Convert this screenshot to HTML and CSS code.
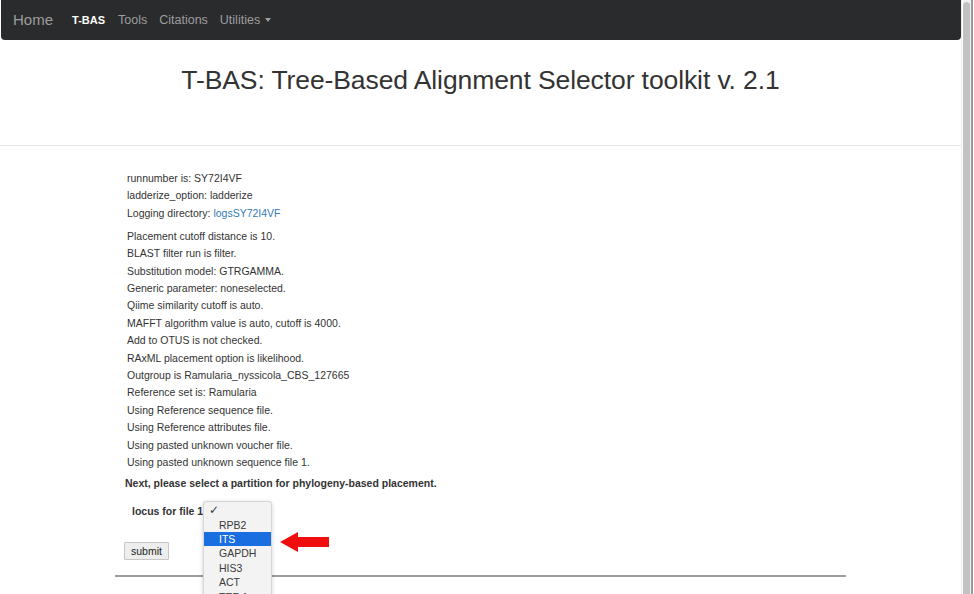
FILE: index.html
```html
<!DOCTYPE html>
<html>
<head>
<meta charset="utf-8">
<link rel="stylesheet" href="styles.css">
</head>
<body>
<div class="page">
  <div class="main">
    <nav class="navbar">
      <a class="brand">Home</a>
      <a class="nav-item active">T-BAS</a>
      <a class="nav-item">Tools</a>
      <a class="nav-item">Citations</a>
      <a class="nav-item">Utilities <span class="caret"></span></a>
    </nav>
    <header class="jumbo">
      <h1>T-BAS: Tree-Based Alignment Selector toolkit v. 2.1</h1>
    </header>
    <section class="content">
      <p class="group">runnumber is: SY72I4VF<br>ladderize_option: ladderize<br>Logging directory: <a class="link">logsSY72I4VF</a></p>
      <p class="group">Placement cutoff distance is 10.<br>BLAST filter run is filter.<br>Substitution model: GTRGAMMA.<br>Generic parameter: noneselected.<br>Qiime similarity cutoff is auto.<br>MAFFT algorithm value is auto, cutoff is 4000.<br>Add to OTUS is not checked.<br>RAxML placement option is likelihood.<br>Outgroup is Ramularia_nyssicola_CBS_127665<br>Reference set is: Ramularia<br>Using Reference sequence file.<br>Using Reference attributes file.<br>Using pasted unknown voucher file.<br>Using pasted unknown sequence file 1.</p>
      <form class="form">
        <p class="next">Next, please select a partition for phylogeny-based placement.</p>
        <div class="locus-row">
          <span class="locus-label">locus for file 1</span>
          <div class="select-wrap">
            <ul class="popup">
              <li class="opt check"><span class="tick">✓</span></li>
              <li class="opt">RPB2</li>
              <li class="opt selected">ITS</li>
              <li class="opt">GAPDH</li>
              <li class="opt">HIS3</li>
              <li class="opt">ACT</li>
              <li class="opt">TEF-1α</li>
            </ul>
            <svg class="arrow" width="50" height="22" viewBox="0 0 50 22">
              <polygon points="0,11 18,1 18,6 49,6 49,16 18,16 18,21" fill="#f00d0d"/>
            </svg>
          </div>
        </div>
        <button class="submit" type="button">submit</button>
      </form>
      <div class="rule"></div>
    </section>
  </div>
  <div class="scrollbar"><div class="thumb"></div></div>
</div>
</body>
</html>
```

FILE: styles.css
```css
html, body {
  margin: 0;
  padding: 0;
  background: #ffffff;
  height: 594px;
  overflow: hidden;
}
body {
  font-family: "Liberation Sans", Arial, Helvetica, sans-serif;
  color: #333333;
}
.page {
  display: flex;
  height: 594px;
}
.main {
  width: 962px;
  flex: none;
  border-right: 1px solid #ececec;
  box-sizing: border-box;
  overflow: hidden;
}
.navbar {
  height: 40px;
  margin-left: 1px;
  background: #2a2b2d;
  border-radius: 0 0 4px 4px;
  display: flex;
  align-items: center;
  padding-left: 12px;
  box-sizing: border-box;
}
.brand {
  font-size: 15px;
  color: #9d9d9d;
  margin-right: 19px;
  padding-bottom: 1px;
}
.nav-item {
  font-size: 12.5px;
  color: #9d9d9d;
  margin-right: 12px;
  padding-bottom: 1px;
}
.nav-item.active {
  font-size: 11px;
  color: #ffffff;
  font-weight: bold;
  margin-right: 13px;
}
.caret {
  display: inline-block;
  width: 0;
  height: 0;
  border-left: 3.5px solid transparent;
  border-right: 3.5px solid transparent;
  border-top: 4px solid #9d9d9d;
  vertical-align: middle;
  margin-left: 1px;
}
.jumbo {
  height: 106px;
  border-bottom: 1px solid #e6e6e6;
  display: flex;
  justify-content: center;
  padding-top: 25px;
  box-sizing: border-box;
}
.jumbo h1 {
  margin: 0;
  font-size: 26.5px;
  font-weight: normal;
  color: #333333;
  letter-spacing: -0.1px;
  line-height: 30px;
}
.content {
  margin-left: 115px;
  width: 731px;
  padding-top: 24px;
}
.group {
  margin: 0 0 5.5px 12px;
  font-size: 10.5px;
  line-height: 17.4px;
}
.link {
  color: #337ab7;
}
.form {
  margin-left: 10px;
}
.next {
  margin: -2px 0 0 0;
  font-size: 10.5px;
  font-weight: bold;
  line-height: 17.4px;
}
.locus-row {
  display: flex;
  align-items: flex-start;
  margin-top: 11px;
  height: 39px;
}
.locus-label {
  font-size: 10.5px;
  font-weight: bold;
  line-height: 17px;
  margin-left: 7px;
  width: 71px;
  white-space: nowrap;
}
.select-wrap {
  position: relative;
  width: 70px;
  height: 17px;
}
.popup {
  position: absolute;
  left: 0;
  top: -2px;
  width: 67px;
  margin: 0;
  padding: 1px 0 0 0;
  list-style: none;
  background: #f3f3f3;
  border: 1px solid #d6d6d6;
  border-bottom: none;
  border-radius: 4px 4px 0 0;
  box-shadow: 0 1px 4px rgba(0,0,0,0.18);
  z-index: 5;
  height: 110px;
  overflow: hidden;
}
.opt {
  font-size: 10.5px;
  line-height: 14.4px;
  height: 14.4px;
  padding-left: 15px;
  color: #3a3a3a;
}
.opt.check {
  padding-left: 5px;
}
.tick {
  font-family: "DejaVu Sans", sans-serif;
  font-size: 12px;
}
.opt.selected {
  background: #1b6ee0;
  color: #ffffff;
}
.arrow {
  position: absolute;
  left: 77px;
  top: 28px;
}
.submit {
  display: block;
  margin-left: -1px;
  width: 45px;
  height: 18px;
  padding: 0;
  font-family: "Liberation Sans", Arial, sans-serif;
  font-size: 10.5px;
  color: #222222;
  background: #eeeeee;
  border: 1px solid #c7c7c7;
  border-radius: 1px;
}
.rule {
  margin-top: 15px;
  height: 2px;
  background: #9c9c9c;
}
.scrollbar {
  width: 11px;
  flex: none;
  background: linear-gradient(to right, #ffffff 0, #ffffff 1px, #f0f0f0 1px, #f0f0f0 9px, #9a9a9a 9px, #9a9a9a 11px);
  position: relative;
}
.thumb {
  margin: 2px 0 0 1px;
  width: 7px;
  height: 592px;
  background: #c2c2c2;
  border-radius: 4px 4px 0 0;
}
```
